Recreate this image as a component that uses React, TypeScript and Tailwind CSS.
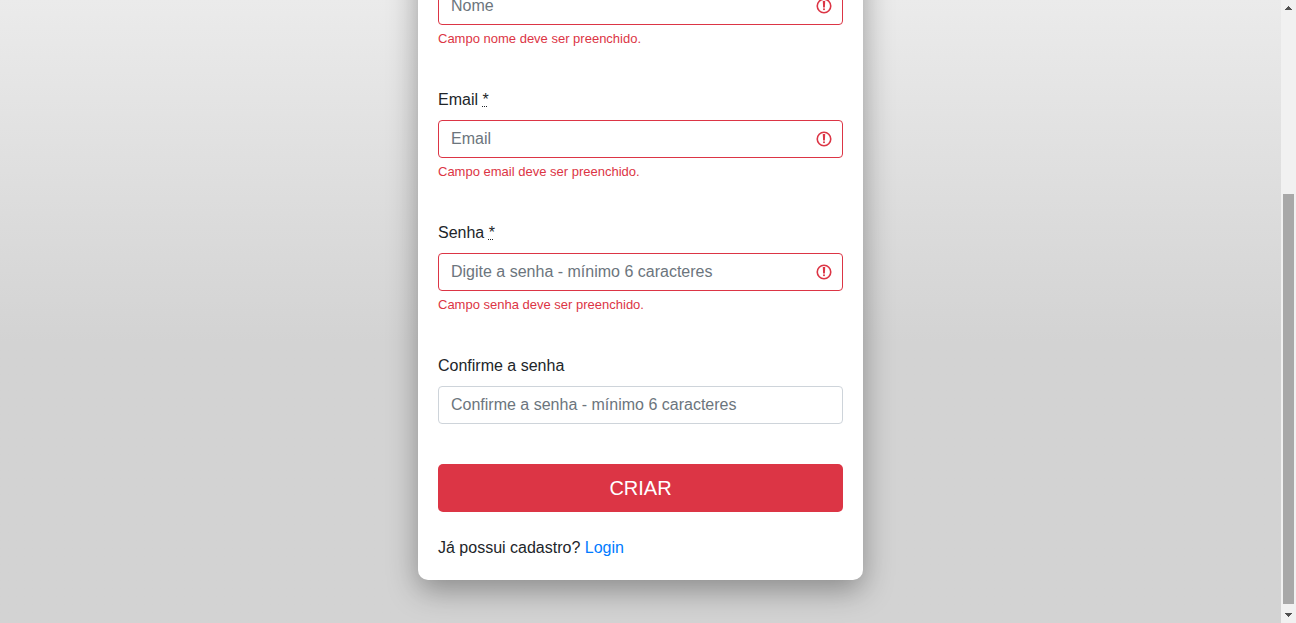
import { useId } from "react";

type FieldProps = {
  name: string;
  label?: string;
  placeholder: string;
  type?: string;
  required?: boolean;
  error?: string;
};

function ErrorIcon() {
  return (
    <svg
      viewBox="0 0 18 18"
      className="pointer-events-none absolute top-1/2 right-2.5 size-[18px] -translate-y-1/2"
      fill="none"
      stroke="#dc3545"
      aria-hidden="true"
    >
      <circle cx="9" cy="9" r="6.75" strokeWidth="1.6" />
      <path stroke="none" fill="#dc3545" d="M7.8 4h2.4l-.3 6.6H8.1z" />
      <circle cx="9" cy="12.3" r="1" fill="#dc3545" stroke="none" />
    </svg>
  );
}

function Field({ name, label, placeholder, type = "text", required, error }: FieldProps) {
  const id = useId();
  return (
    <div className="mb-10">
      {label && (
        <label htmlFor={id} className="mb-2 block">
          {label}
          {required && (
            <>
              {" "}
              <abbr title="obrigatório" className="underline decoration-dotted decoration-1">
                *
              </abbr>
            </>
          )}
        </label>
      )}
      <div className="relative">
        <input
          id={id}
          name={name}
          type={type}
          placeholder={placeholder}
          aria-label={label ? undefined : placeholder}
          aria-invalid={error ? true : undefined}
          aria-describedby={error ? `${id}-error` : undefined}
          className={
            error
              ? "block h-[38px] w-full rounded border border-[#dc3545] bg-white pr-10 pl-3 placeholder:text-[#6c757d]"
              : "block h-[38px] w-full rounded border border-[#ced4da] bg-white px-3 placeholder:text-[#6c757d]"
          }
        />
        {error && <ErrorIcon />}
      </div>
      {error && (
        <p id={`${id}-error`} className="mt-1 text-[13px] leading-[19px] text-[#dc3545]">
          {error}
        </p>
      )}
    </div>
  );
}

function Scrollbar() {
  return (
    <div className="flex w-[15px] shrink-0 flex-col items-center bg-[#f1f1f1]" aria-hidden="true">
      <svg viewBox="0 0 15 17" className="h-[17px] w-[15px]" fill="#505050" shapeRendering="crispEdges">
        <path d="M7 6h1v1h1v1h1v1h1v1H4V9h1V8h1V7h1z" />
      </svg>
      <div className="grow-[177]" />
      <div className="w-[11px] grow-[410] bg-[#a8a8a8]" />
      <svg viewBox="0 0 15 19" className="h-[19px] w-[15px]" fill="#505050" shapeRendering="crispEdges">
        <path d="M4 9h7v1h-1v1H9v1H8v1H7v-1H6v-1H5v-1H4z" />
      </svg>
    </div>
  );
}

export default function App() {
  return (
    <div className="flex h-screen overflow-hidden font-['Liberation_Sans',Arial,sans-serif] text-base text-[#212529]">
      <main className="flex min-w-0 flex-1 flex-col items-center justify-end overflow-hidden bg-linear-to-b from-[#ebebeb] to-[#d3d3d3] to-55% pb-[43px]">
        <form
          noValidate
          onSubmit={(event) => event.preventDefault()}
          className="w-full max-w-[445px] rounded-[10px] bg-white px-5 pt-[60px] pb-5 shadow-[0_10px_30px_rgba(0,0,0,0.35)]"
        >
          <Field name="nome" placeholder="Nome" error="Campo nome deve ser preenchido." />
          <Field name="email" label="Email" required type="email" placeholder="Email" error="Campo email deve ser preenchido." />
          <Field
            name="senha"
            label="Senha"
            required
            type="password"
            placeholder="Digite a senha - mínimo 6 caracteres"
            error="Campo senha deve ser preenchido."
          />
          <Field
            name="confirmacao"
            label="Confirme a senha"
            type="password"
            placeholder="Confirme a senha - mínimo 6 caracteres"
          />
          <button type="submit" className="mb-6 block h-12 w-full cursor-pointer rounded-[5px] bg-[#dc3545] text-xl text-white">
            CRIAR
          </button>
          <p>
            Já possui cadastro?{" "}
            <a href="#login" className="text-[#007bff] hover:underline">
              Login
            </a>
          </p>
        </form>
      </main>
      <Scrollbar />
    </div>
  );
}
